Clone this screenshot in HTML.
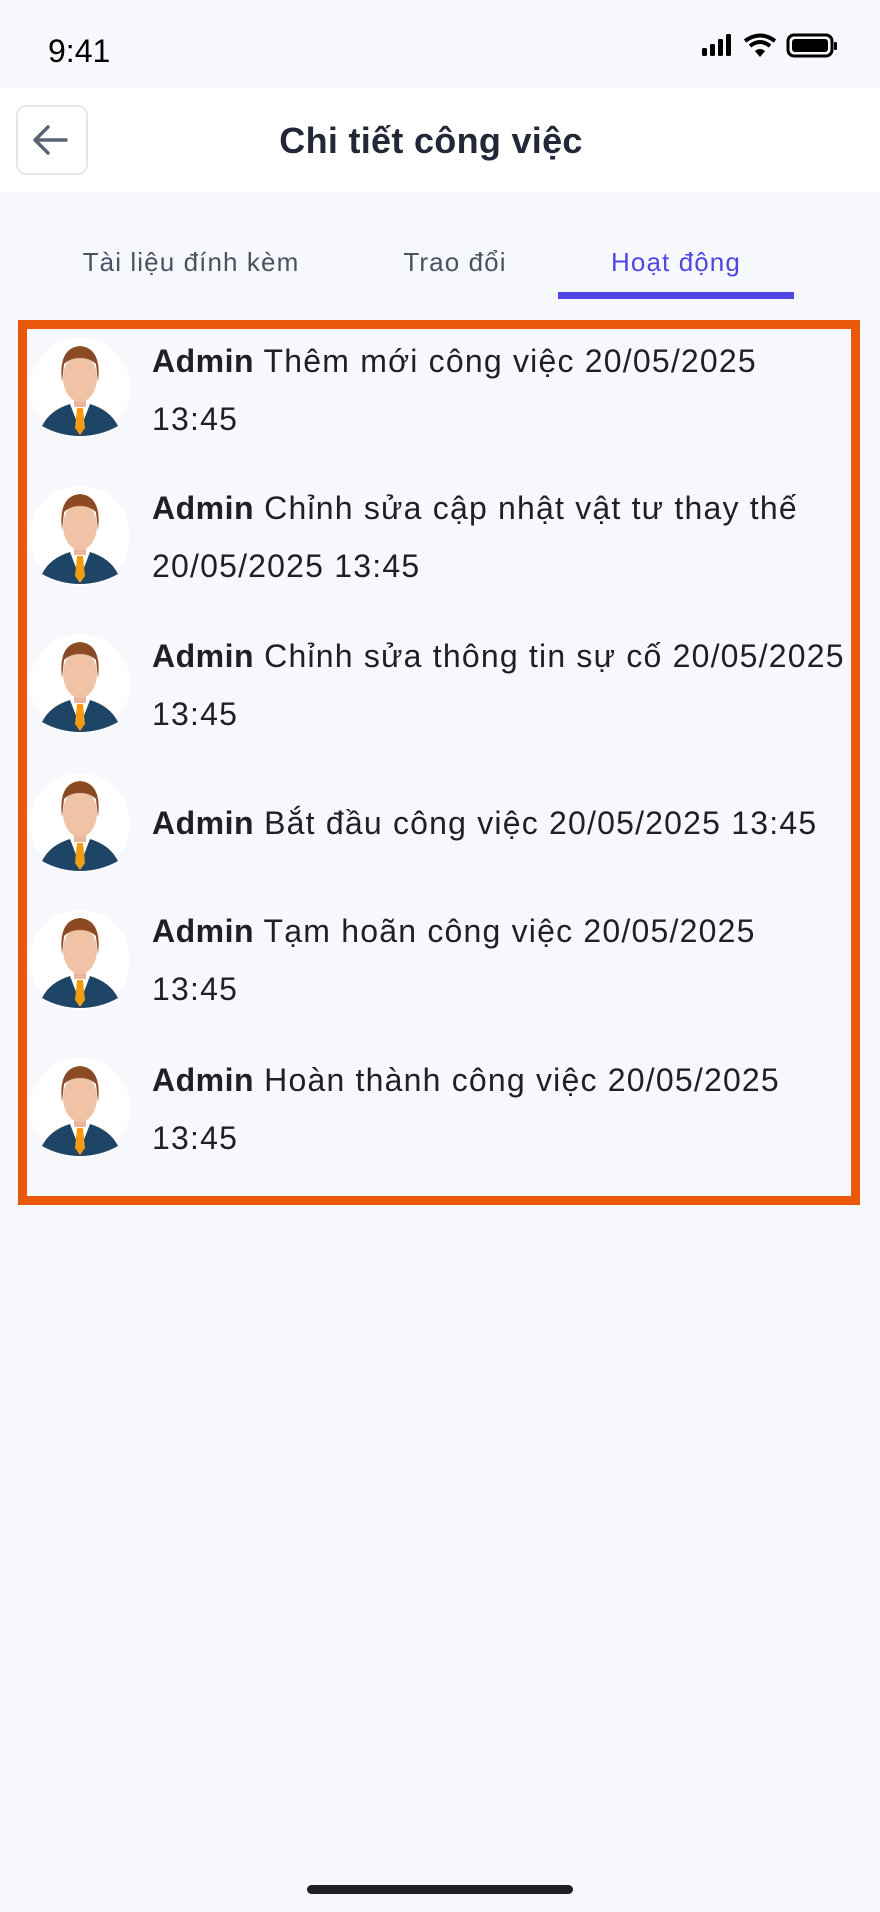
<!DOCTYPE html>
<html><head><meta charset="utf-8"><style>
*{margin:0;padding:0;box-sizing:border-box}
body{width:880px;height:1912px;background:#f7f8fc;font-family:"Liberation Sans",sans-serif;position:relative;overflow:hidden;color:#1f2023}
.abs{position:absolute}
.txt{position:absolute;left:152px;font-size:32px;letter-spacing:1.2px;line-height:58px;color:#1f2023;width:720px;white-space:nowrap}
.txt b{font-weight:700;letter-spacing:0.5px}
.tab{font-size:26px;letter-spacing:1.1px;text-align:center;white-space:nowrap}
</style></head><body>
<div class="abs" style="left:48px;top:33px;font-size:32px;color:#000">9:41</div>
<svg class="abs" style="left:700px;top:32px" width="176" height="28" viewBox="0 0 176 28">
<rect x="2" y="16" width="5" height="8" rx="1.5" fill="#000"/><rect x="10" y="12" width="5" height="12" rx="1.5" fill="#000"/><rect x="18" y="7" width="5" height="17" rx="1.5" fill="#000"/><rect x="26" y="2" width="5" height="22" rx="1.5" fill="#000"/>
<path d="M45 9 Q60 -2 75 9" stroke="#000" stroke-width="4" fill="none"/><path d="M50 14 Q60 6 70 14" stroke="#000" stroke-width="4" fill="none"/><path d="M55 19 L60 25 L65 19 Q60 15 55 19Z" fill="#000"/>
<rect x="88" y="3" width="44" height="21" rx="6" stroke="#000" stroke-width="3" fill="none"/><rect x="92" y="7" width="36" height="13" rx="3" fill="#000"/><rect x="134" y="10" width="3" height="8" rx="1" fill="#000"/>
</svg>
<div class="abs" style="left:0;top:88px;width:880px;height:104px;background:#fff"></div>
<div class="abs" style="left:16px;top:105px;width:72px;height:70px;border:2px solid #e3e5ea;border-radius:10px;background:#fff"></div>
<svg class="abs" style="left:30px;top:120px" width="44" height="40" viewBox="0 0 44 40"><path d="M36 20H6M18 7L5 20L18 33" stroke="#5b6474" stroke-width="3.5" fill="none" stroke-linecap="round" stroke-linejoin="round"/></svg>
<div class="abs" style="left:0;top:120px;width:862px;text-align:center;font-size:36px;letter-spacing:0.3px;font-weight:700;color:#232838">Chi tiết công việc</div>
<div class="abs tab" style="left:60px;top:247px;width:262px;color:#4a5160">Tài liệu đính kèm</div>
<div class="abs tab" style="left:380px;top:247px;width:150px;color:#4a5160">Trao đổi</div>
<div class="abs tab" style="left:558px;top:247px;width:236px;color:#4f46e5">Hoạt động</div>
<div class="abs" style="left:558px;top:292px;width:236px;height:7px;background:#4f46e5"></div>
<div class="abs" style="left:18px;top:320px;width:842px;height:885px;border:9px solid #ea580c"></div>

<svg width="0" height="0" style="position:absolute"><defs><g id="man">
<circle cx="50" cy="50" r="50" fill="#fff"/>
<path d="M12 88 Q20 72 40 66 L50 70 L60 66 Q80 72 88 88 Q70 98 50 98 Q30 98 12 88Z" fill="#1f4566"/>
<path d="M40 66 L50 92 L60 66 Z" fill="#fff"/>
<path d="M47 70 L53 70 L55 90 L50 97 L45 90Z" fill="#f39c12"/>
<rect x="44" y="55" width="12" height="14" fill="#e8b69b"/>
<ellipse cx="50" cy="40" rx="17" ry="24" fill="#f0c2a6"/>
<path d="M32 44 Q28 10 50 8 Q72 10 68 44 L66 26 Q60 20 50 20 Q40 20 34 26Z" fill="#8b4a24"/>
</g></defs></svg>

<svg class="abs" style="left:30px;top:338px" width="100" height="100"><use href="#man"/></svg>
<div class="txt" style="top:332px"><b>Admin</b> Thêm mới công việc 20/05/2025<br>13:45</div>
<svg class="abs" style="left:30px;top:486px" width="100" height="100"><use href="#man"/></svg>
<div class="txt" style="top:479px"><b>Admin</b> Chỉnh sửa cập nhật vật tư thay thế<br>20/05/2025 13:45</div>
<svg class="abs" style="left:30px;top:634px" width="100" height="100"><use href="#man"/></svg>
<div class="txt" style="top:627px"><b>Admin</b> Chỉnh sửa thông tin sự cố 20/05/2025<br>13:45</div>
<svg class="abs" style="left:30px;top:773px" width="100" height="100"><use href="#man"/></svg>
<div class="txt" style="top:794px"><b>Admin</b> Bắt đầu công việc 20/05/2025 13:45</div>
<svg class="abs" style="left:30px;top:910px" width="100" height="100"><use href="#man"/></svg>
<div class="txt" style="top:902px"><b>Admin</b> Tạm hoãn công việc 20/05/2025<br>13:45</div>
<svg class="abs" style="left:30px;top:1058px" width="100" height="100"><use href="#man"/></svg>
<div class="txt" style="top:1051px"><b>Admin</b> Hoàn thành công việc 20/05/2025<br>13:45</div>

<div class="abs" style="left:307px;top:1885px;width:266px;height:9px;border-radius:5px;background:#1f2023"></div>
</body></html>
